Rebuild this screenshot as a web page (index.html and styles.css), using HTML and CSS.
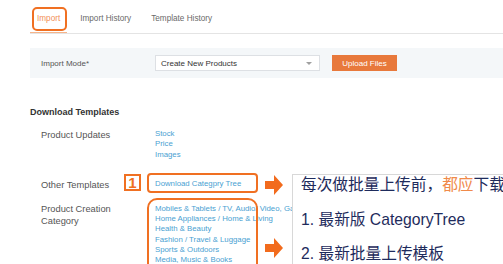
FILE: index.html
```html
<!DOCTYPE html>
<html lang="en">
<head>
<meta charset="utf-8">
<title>Import</title>
<link rel="stylesheet" href="styles.css">
</head>
<body>
<div class="page">
  <nav class="tabs">
    <a class="tab active">Import</a>
    <a class="tab">Import History</a>
    <a class="tab">Template History</a>
  </nav>

  <section class="mode-bar">
    <span class="mode-label">Import Mode*</span>
    <div class="select"><span>Create New Products</span><span class="caret"></span></div>
    <button class="upload">Upload Files</button>
  </section>

  <h2 class="section-title">Download Templates</h2>

  <div class="tpl-row first">
    <div class="tpl-label">Product Updates</div>
    <ul class="links">
      <li><a>Stock</a></li>
      <li><a>Price</a></li>
      <li><a>Images</a></li>
    </ul>
  </div>

  <div class="tpl-row second">
    <div class="tpl-label">Other Templates</div>
    <ul class="links">
      <li><a>Download Categpry Tree</a></li>
    </ul>
  </div>

  <div class="tpl-row third">
    <div class="tpl-label">Product Creation<br>Category</div>
    <ul class="links">
      <li><a>Mobiles &amp; Tablets / TV, Audio/ Video, Gaming &amp; Wearables</a></li>
      <li><a>Home Appliances / Home &amp; Living</a></li>
      <li><a>Health &amp; Beauty</a></li>
      <li><a>Fashion / Travel &amp; Luggage</a></li>
      <li><a>Sports &amp; Outdoors</a></li>
      <li><a>Media, Music &amp; Books</a></li>
    </ul>
  </div>

  <div class="mark mark-import"></div>
  <div class="mark-num">1</div>
  <div class="mark mark-tree"></div>
  <div class="mark mark-cats"></div>
  <svg class="arrow arrow-1" viewBox="0 0 18 20"><polygon points="0,6 9,6 9,0 18,10 9,20 9,14 0,14"/></svg>
  <svg class="arrow arrow-2" viewBox="0 0 18 20"><polygon points="0,6 9,6 9,0 18,10 9,20 9,14 0,14"/></svg>

  <div class="callout">
    <p class="note">每次做批量上传前，<span class="hl">都应</span>下载</p>
    <p class="note">1. 最新版 CategoryTree</p>
    <p class="note">2. 最新批量上传模板</p>
  </div>
</div>
</body>
</html>
```

FILE: styles.css
```css
* { box-sizing: border-box; }
html, body { margin: 0; padding: 0; background: #fff; }
body { font-family: "Liberation Sans", Arial, sans-serif; }

.page {
  position: relative;
  width: 503px;
  height: 264px;
  overflow: hidden;
}

.tabs {
  display: flex;
  gap: 6px;
  margin-left: 30px;
  height: 34px;
  border-bottom: 1px solid #e4e4e4;
}
.tab {
  padding: 13px 7px 0;
  font-size: 8.2px;
  line-height: 12px;
  color: #6a6a6a;
}
.tab.active {
  color: #f29158;
  box-shadow: inset 0 -1px 0 #f6b48a;
}

.mode-bar {
  display: flex;
  align-items: center;
  margin: 14px 0 0 30px;
  height: 30px;
  padding-left: 11px;
  background: #f4f7f9;
}
.mode-label {
  width: 114px;
  font-size: 8px;
  color: #555;
}
.select {
  display: flex;
  align-items: center;
  justify-content: space-between;
  width: 165px;
  height: 16px;
  padding: 0 7px 0 5px;
  background: #fff;
  border: 1px solid #dde0e4;
  font-size: 8px;
  color: #333;
}
.caret {
  width: 0;
  height: 0;
  border-left: 3px solid transparent;
  border-right: 3px solid transparent;
  border-top: 3px solid #a0a0a0;
}
.upload {
  margin-left: 12px;
  width: 65px;
  height: 16px;
  padding: 0;
  border: 0;
  background: #e8793c;
  color: #fff;
  font-family: inherit;
  font-size: 8px;
}

.section-title {
  margin: 29px 0 0 30px;
  font-size: 9px;
  line-height: 11px;
  font-weight: bold;
  color: #333;
}

.tpl-row {
  display: grid;
  grid-template-columns: 114px auto;
  margin-left: 41px;
}
.tpl-row.first { margin-top: 11px; }
.tpl-row.second { margin-top: 19px; }
.tpl-row.third { margin-top: 12px; }
.tpl-label {
  font-size: 9.3px;
  line-height: 12px;
  color: #555;
}
.links {
  list-style: none;
  margin: 0;
  padding: 0;
  white-space: nowrap;
}
.links li {
  font-size: 7.8px;
  line-height: 10.3px;
  color: #4a9fd2;
}
.third .links { padding-top: 1px; }

.mark {
  position: absolute;
  border: 2px solid #f07022;
}
.mark-import { left: 32px; top: 7px; width: 35px; height: 24px; border-radius: 5px; }
.mark-tree { left: 147px; top: 173px; width: 111px; height: 20px; border-radius: 4px; }
.mark-cats { left: 147px; top: 198px; width: 111px; height: 90px; border-radius: 10px; }
.mark-num {
  position: absolute;
  left: 124px;
  top: 174px;
  width: 17px;
  height: 17px;
  border: 2px solid #f07022;
  color: #f07022;
  font-weight: bold;
  font-size: 15px;
  line-height: 13px;
  text-align: center;
}

.arrow {
  position: absolute;
  left: 265px;
  width: 18px;
  height: 20px;
  fill: #f26b1d;
}
.arrow-1 { top: 175px; }
.arrow-2 { top: 238px; }

.callout {
  position: absolute;
  left: 292px;
  top: 174px;
  width: 240px;
  height: 110px;
  padding-left: 8px;
  background: #fff;
  border: 1px solid #d8d8d8;
  white-space: nowrap;
}
.note {
  margin: 0;
  font-family: "Liberation Sans", "Noto Sans CJK SC", sans-serif;
  font-size: 15.7px;
  line-height: 20px;
  color: #1e2b5c;
}
.note + .note { margin-top: 15px; }
.note:nth-child(3) { margin-top: 14px; }
.hl { color: #f08a4a; }
```
